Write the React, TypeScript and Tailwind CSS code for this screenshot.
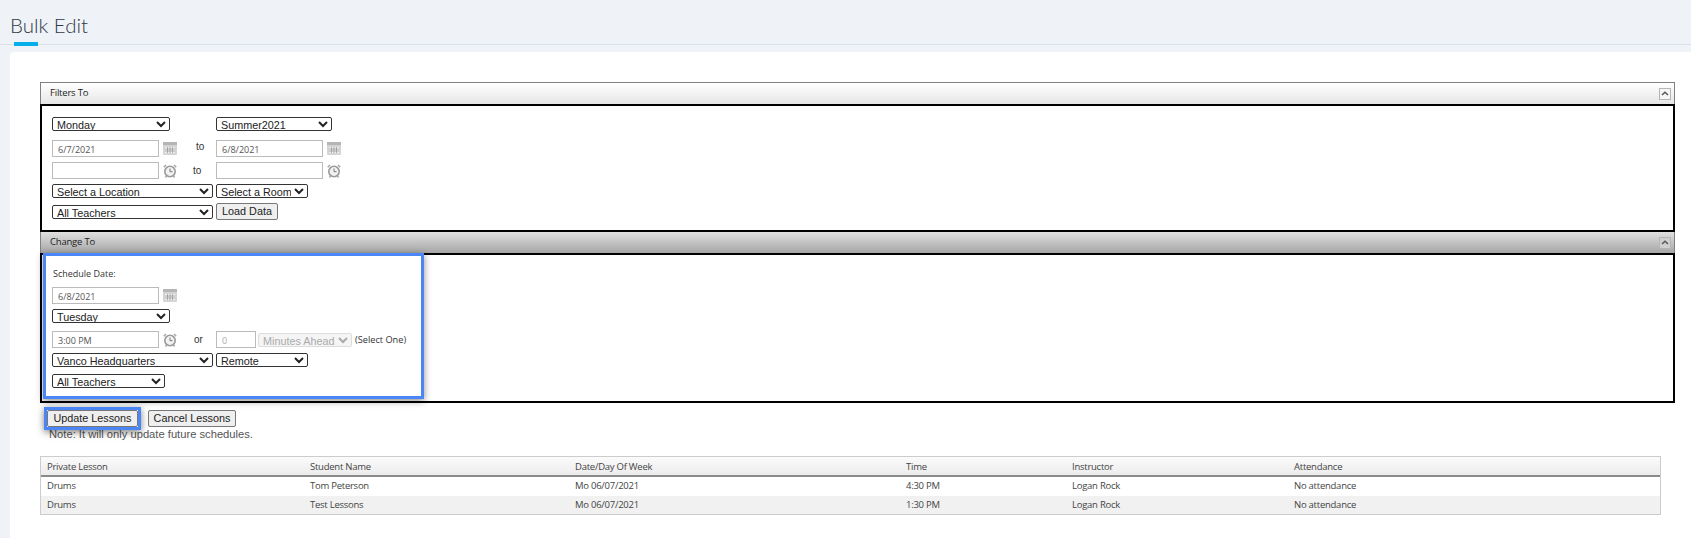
const arial = "font-['Liberation_Sans',Arial,sans-serif]";

function Sel({ w, value, disabled }: { w: string; value: string; disabled?: boolean }) {
  return (
    <select
      disabled={disabled}
      defaultValue={value}
      className={`${w} h-[14px] rounded-[2px] border border-[#333] bg-white text-[10.8px] leading-[12px] text-[#222] ${arial} disabled:border-[#ddd] disabled:bg-[#f5f5f5] disabled:text-[#aaa]`}
    >
      <option>{value}</option>
    </select>
  );
}

function Inp({ value, w = "w-[107px]", disabled }: { value?: string; w?: string; disabled?: boolean }) {
  return (
    <input
      readOnly
      disabled={disabled}
      value={value ?? ""}
      className={`${w} h-[17px] shrink-0 border border-[#bbb] bg-white px-[5px] pt-[2px] text-[9px] text-[#555] disabled:text-[#aaa] font-['Open_Sans',sans-serif]`}
    />
  );
}

function Btn({ children, w }: { children: string; w: string }) {
  return (
    <button className={`${w} h-[17px] whitespace-nowrap rounded-[2px] border border-[#777] bg-[#efefef] text-center text-[10.8px] leading-[13px] text-[#222] ${arial}`}>
      {children}
    </button>
  );
}

function CalIcon() {
  return (
    <svg width="14" height="13" viewBox="0 0 14 13" className="ml-1 shrink-0">
      <rect x="0" y="0" width="14" height="13" rx="1" fill="#d4d4d4" />
      <rect x="0" y="0" width="14" height="3" fill="#b5b5b5" />
      <rect x="2" y="5" width="10" height="6" fill="#f2f2f2" />
      <path d="M2 7h10M2 9h10M4.5 5v6M7 5v6M9.5 5v6" stroke="#9a9a9a" strokeWidth="0.8" />
    </svg>
  );
}

function ClockIcon() {
  return (
    <svg width="14" height="14" viewBox="0 0 14 14" className="ml-1 shrink-0" fill="none">
      <circle cx="7" cy="7.5" r="5.2" stroke="#9a9a9a" strokeWidth="1.6" fill="#f2f2f2" />
      <path d="M7 4.5v3.2h2.5" stroke="#777" strokeWidth="1" />
      <path d="M0.8 3.2 3 1M13.2 3.2 11 1M3.5 12l-1 1.5M10.5 12l1 1.5" stroke="#a8a8a8" strokeWidth="1.6" />
    </svg>
  );
}

function PanelHead({ title, dark }: { title: string; dark?: boolean }) {
  return (
    <div
      className={`flex h-[21px] items-center justify-between pl-[9px] pr-[3px] ${
        dark ? "bg-gradient-to-b from-[#e0e0e0] to-[#a6a6a6]" : "bg-gradient-to-b from-[#ffffff] to-[#e6e6e6]"
      }`}
    >
      <span className="text-[9.5px] tracking-[-0.2px] text-[#222] font-['Open_Sans',sans-serif]">{title}</span>
      <span className={`flex h-[12px] w-[12px] items-center justify-center border border-[#b5b5b5] ${dark ? "bg-[#cfcfcf]" : "bg-[#f6f6f6]"}`}>
        <svg width="8" height="5" viewBox="0 0 8 5" fill="none">
          <path d="M1 4 4 1.3 7 4" stroke="#555" strokeWidth="1.5" />
        </svg>
      </span>
    </div>
  );
}

const rows = [
  ["Drums", "Tom Peterson", "Mo 06/07/2021", "4:30 PM", "Logan Rock", "No attendance"],
  ["Drums", "Test Lessons", "Mo 06/07/2021", "1:30 PM", "Logan Rock", "No attendance"],
];
const heads = ["Private Lesson", "Student Name", "Date/Day Of Week", "Time", "Instructor", "Attendance"];
const cols = "grid grid-cols-[263px_265px_331px_166px_222px_1fr] pl-[6px] items-center";

export default function App() {
  return (
    <div className="h-[538px] w-[1691px] overflow-hidden bg-[#eff3f8]">
      <header className="relative h-[52px]">
        <h1 className="pl-[10px] pt-[9px] text-[20.5px] leading-[32px] font-light text-[#2f3a45] font-['Lato',sans-serif]">Bulk Edit</h1>
        <div className="absolute left-0 right-0 top-[44px] h-px bg-[#d9e0e6]" />
        <div className="absolute left-[14px] top-[42px] h-[4px] w-[24px] bg-[#06aeea]" />
      </header>

      <main className="ml-[10px] h-[486px] rounded-tl-[4px] bg-white pl-[30px] pr-[16px] pt-[30px]">
        <section className="border-x border-t border-[#808080]">
          <PanelHead title="Filters To" />
          <div className="-mx-px h-[128px] border-2 border-black pl-[10px] pt-[11px]">
            <div className="flex items-center gap-[46px]">
              <Sel w="w-[118px]" value="Monday" />
              <Sel w="w-[116px]" value="Summer2021" />
            </div>
            <div className="mt-[8px] flex items-center">
              <Inp value="6/7/2021" />
              <CalIcon />
              <span className={`w-[39px] pb-[3px] pl-[19px] text-[10px] text-[#333] ${arial}`}>to</span>
              <Inp value="6/8/2021" />
              <CalIcon />
            </div>
            <div className="mt-[5px] flex items-center">
              <Inp />
              <ClockIcon />
              <span className={`w-[39px] pl-[16px] text-[10px] text-[#333] ${arial}`}>to</span>
              <Inp />
              <ClockIcon />
            </div>
            <div className="mt-[5px] flex items-center gap-[3px]">
              <Sel w="w-[161px]" value="Select a Location" />
              <Sel w="w-[92px]" value="Select a Room" />
            </div>
            <div className="mt-[5px] flex items-center gap-[3px]">
              <Sel w="w-[161px]" value="All Teachers" />
              <Btn w="w-[62px]">Load Data</Btn>
            </div>
          </div>
          <PanelHead title="Change To" dark />
          <div className="-mx-px h-[150px] border-2 border-black">
            <div className="relative -mt-[2px] ml-px h-[146px] w-[381px] border-[3px] border-[#4a86f5] bg-white pl-[6px] pt-[11px] shadow-[0_2px_7px_rgba(0,0,0,0.45)]">
              <div className="ml-px h-[14px] text-[9px] leading-[14px] text-[#333] font-['Open_Sans',sans-serif]">Schedule Date:</div>
              <div className="mt-[6px] flex items-center">
                <Inp value="6/8/2021" />
                <CalIcon />
              </div>
              <div className="mt-[5px] flex">
                <Sel w="w-[118px]" value="Tuesday" />
              </div>
              <div className="mt-[8px] flex items-center">
                <Inp value="3:00 PM" />
                <ClockIcon />
                <span className={`w-[39px] pl-[17px] text-[10px] text-[#333] ${arial}`}>or</span>
                <Inp value="0" w="w-[40px]" disabled />
                <span className="ml-[2px] flex">
                  <Sel w="w-[94px]" value="Minutes Ahead" disabled />
                </span>
                <span className="ml-[3px] whitespace-nowrap text-[9.2px] text-[#333] font-['Open_Sans',sans-serif]">(Select One)</span>
              </div>
              <div className="mt-[5px] flex items-center gap-[3px]">
                <Sel w="w-[161px]" value="Vanco Headquarters" />
                <Sel w="w-[92px]" value="Remote" />
              </div>
              <div className="mt-[7px] flex">
                <Sel w="w-[113px]" value="All Teachers" />
              </div>
            </div>
          </div>
        </section>

        <div className="ml-[4px] mt-[4px] flex items-center">
          <div className="relative border-[3px] border-[#4a86f5] shadow-[0_2px_7px_rgba(0,0,0,0.5)]">
            <Btn w="w-[91px] block">Update Lessons</Btn>
          </div>
          <div className="ml-[7px]">
            <Btn w="w-[88px] block">Cancel Lessons</Btn>
          </div>
        </div>
        <p className={`-mt-[2px] ml-[9px] h-[13px] text-[11.2px] leading-[13px] text-[#555] ${arial}`}>Note: It will only update future schedules.</p>

        <div className="mt-[15px] w-[1621px] border border-[#ccc] text-[9.5px] tracking-[-0.25px] text-[#444] font-['Open_Sans',sans-serif]">
          <div className={`${cols} h-[20px] border-b-2 border-[#8a8a8a] bg-gradient-to-b from-[#fbfbfb] to-[#ececec] pt-[2px]`}>
            {heads.map((h) => (
              <span key={h}>{h}</span>
            ))}
          </div>
          {rows.map((r, i) => (
            <div key={i} className={`${cols} ${i === 0 ? "h-[19px] bg-white" : "h-[18px] bg-[#f1f1f1]"}`}>
              {r.map((c, j) => (
                <span key={j}>{c}</span>
              ))}
            </div>
          ))}
        </div>
      </main>
    </div>
  );
}
